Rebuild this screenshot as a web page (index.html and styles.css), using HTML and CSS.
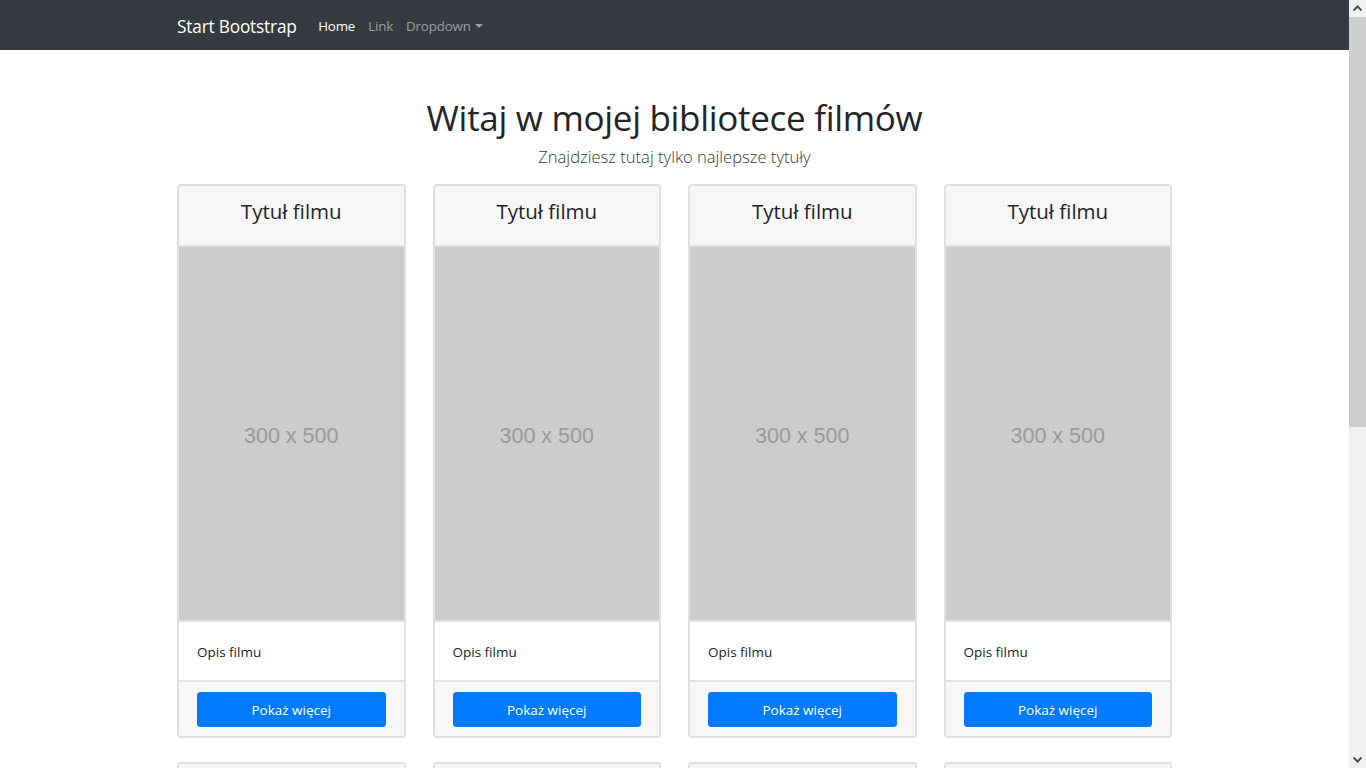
FILE: index.html
```html
<!DOCTYPE html>
<html lang="pl">
<head>
<meta charset="utf-8">
<title>Start Bootstrap</title>
<link rel="stylesheet" href="styles.css">
</head>
<body>
<div class="window">
  <div class="page">
    <nav class="navbar">
      <div class="nav-inner">
        <a class="brand" href="#">Start Bootstrap</a>
        <ul class="nav-links">
          <li><a class="nav-link active" href="#">Home</a></li>
          <li><a class="nav-link" href="#">Link</a></li>
          <li><a class="nav-link dropdown" href="#">Dropdown<span class="caret"></span></a></li>
        </ul>
      </div>
    </nav>
    <main class="container">
      <header class="hero">
        <h1 class="hero-title">Witaj w mojej bibliotece filmów</h1>
        <p class="lead">Znajdziesz tutaj tylko najlepsze tytuły</p>
      </header>
      <div class="grid">
        <div class="card"><div class="card-header">Tytuł filmu</div><div class="card-img">300 x 500</div><div class="card-body">Opis filmu</div><div class="card-footer"><a class="btn" href="#">Pokaż więcej</a></div></div>
        <div class="card"><div class="card-header">Tytuł filmu</div><div class="card-img">300 x 500</div><div class="card-body">Opis filmu</div><div class="card-footer"><a class="btn" href="#">Pokaż więcej</a></div></div>
        <div class="card"><div class="card-header">Tytuł filmu</div><div class="card-img">300 x 500</div><div class="card-body">Opis filmu</div><div class="card-footer"><a class="btn" href="#">Pokaż więcej</a></div></div>
        <div class="card"><div class="card-header">Tytuł filmu</div><div class="card-img">300 x 500</div><div class="card-body">Opis filmu</div><div class="card-footer"><a class="btn" href="#">Pokaż więcej</a></div></div>
        <div class="card"><div class="card-header">Tytuł filmu</div><div class="card-img">300 x 500</div><div class="card-body">Opis filmu</div><div class="card-footer"><a class="btn" href="#">Pokaż więcej</a></div></div>
        <div class="card"><div class="card-header">Tytuł filmu</div><div class="card-img">300 x 500</div><div class="card-body">Opis filmu</div><div class="card-footer"><a class="btn" href="#">Pokaż więcej</a></div></div>
        <div class="card"><div class="card-header">Tytuł filmu</div><div class="card-img">300 x 500</div><div class="card-body">Opis filmu</div><div class="card-footer"><a class="btn" href="#">Pokaż więcej</a></div></div>
        <div class="card"><div class="card-header">Tytuł filmu</div><div class="card-img">300 x 500</div><div class="card-body">Opis filmu</div><div class="card-footer"><a class="btn" href="#">Pokaż więcej</a></div></div>
      </div>
    </main>
  </div>
  <div class="scrollbar">
    <div class="sb-btn"><svg width="17" height="17" viewBox="0 0 17 17"><path d="M4.5 10.5 L8.5 6.5 L12.5 10.5" fill="none" stroke="#505050" stroke-width="2"/></svg></div>
    <div class="sb-thumb"></div>
    <div class="sb-track"></div>
    <div class="sb-btn"><svg width="17" height="17" viewBox="0 0 17 17"><path d="M4.5 6.5 L8.5 10.5 L12.5 6.5" fill="none" stroke="#505050" stroke-width="2"/></svg></div>
  </div>
</div>
</body>
</html>
```

FILE: styles.css
```css
* { box-sizing: border-box; }

html, body {
  margin: 0;
  height: 768px;
  overflow: hidden;
}

body {
  font-family: "Open Sans", "Noto Sans", sans-serif;
  color: #212529;
  background: #fff;
}

a { text-decoration: none; }

.window {
  display: flex;
  height: 768px;
}

.page {
  flex: 1;
  overflow: hidden;
}

/* navbar */
.navbar {
  background: #343a40;
  height: 50px;
}

.nav-inner {
  width: 995px;
  margin: 0 auto;
  height: 50px;
  padding-top: 2px;
  display: flex;
  align-items: center;
}

.brand {
  color: #fff;
  font-size: 17.3px;
  margin-right: 15px;
  letter-spacing: -0.2px;
}

.nav-links {
  list-style: none;
  margin: 0;
  padding: 0;
  display: flex;
}

.nav-link {
  display: block;
  padding: 0 6.5px;
  font-size: 13.3px;
  color: rgba(255, 255, 255, 0.5);
  letter-spacing: -0.15px;
}

.nav-link.active { color: #fff; }

.caret {
  display: inline-block;
  margin-left: 4px;
  vertical-align: 3px;
  border-top: 4.5px solid rgba(255, 255, 255, 0.5);
  border-left: 4px solid transparent;
  border-right: 4px solid transparent;
}

/* hero */
.container {
  width: 995px;
  margin: 0 auto;
}

.hero {
  text-align: center;
  padding-top: 46px;
}

.hero-title {
  margin: 0;
  font-size: 35px;
  font-weight: 400;
  line-height: 43px;
  letter-spacing: -0.3px;
}

.lead {
  margin: 4px 0 0;
  font-size: 16.6px;
  font-weight: 300;
  line-height: 27px;
  color: #343a40;
}

/* cards */
.grid {
  margin-top: 14px;
  display: grid;
  grid-template-columns: repeat(4, 1fr);
  column-gap: 27px;
  row-gap: 24px;
}

.card {
  border: 2px solid #e0e0e0;
  border-radius: 4px;
  overflow: hidden;
  background: #fff;
  display: flex;
  flex-direction: column;
}

.card-header {
  background: #f7f7f7;
  height: 61px;
  border-bottom: 2px solid #e3e3e3;
  text-align: center;
  font-size: 20.5px;
  line-height: 50px;
}

.card-img {
  height: 375px;
  background: #cccccc;
  border-bottom: 2px solid #e0e0e0;
  display: flex;
  align-items: center;
  justify-content: center;
  font-family: "Liberation Sans", Arial, sans-serif;
  font-size: 21.5px;
  color: #9b9b9b;
  padding-top: 5px;
}

.card-body {
  height: 60px;
  border-bottom: 2px solid #e3e3e3;
  padding: 2px 18px 0;
  display: flex;
  align-items: center;
  font-size: 13.5px;
}

.card-footer {
  background: #f7f7f7;
  padding: 10px 18px 9px;
}

.btn {
  display: block;
  height: 35px;
  line-height: 36px;
  background: #007bff;
  color: #fff;
  border-radius: 3.5px;
  text-align: center;
  font-size: 13.5px;
}

/* scrollbar */
.scrollbar {
  width: 17px;
  background: #f0f0f0;
  display: flex;
  flex-direction: column;
}

.sb-btn {
  height: 17px;
  flex: none;
}

.sb-btn svg { display: block; }

.sb-thumb {
  height: 410px;
  background: #cdcdcd;
  flex: none;
}

.sb-track { flex: 1; }
```
